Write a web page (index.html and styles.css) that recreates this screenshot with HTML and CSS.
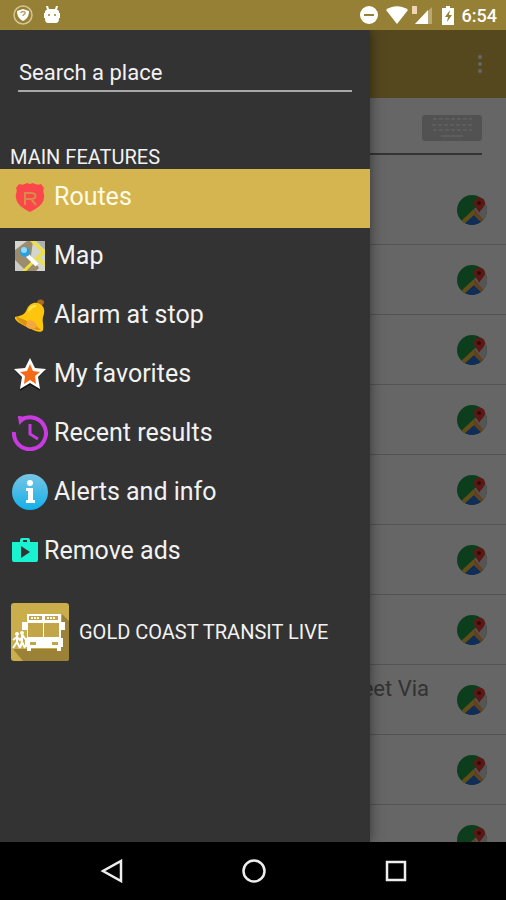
FILE: index.html
```html
<!DOCTYPE html>
<html lang="en">
<head>
    <meta charset="utf-8">
    <meta name="viewport" content="width=device-width, initial-scale=1.0">
    <title>Gold Coast Transit Live</title>
    <link rel="stylesheet" href="styles.css">
</head>
<body>
    <!-- shared icon for the route rows -->
    <svg class="defs" width="0" height="0">
        <symbol id="maps" viewBox="0 0 30 30">
            <clipPath id="disc"><circle cx="15" cy="15" r="15"/></clipPath>
            <g clip-path="url(#disc)">
                <path d="M0 0h30v30H0z" fill="#1e9b4c"/>
                <path d="M17 14L30 4v26z" fill="#d8d4d4"/>
                <path d="M5 30L17 18l12 12z" fill="#2a72dc"/>
                <path d="M2 28L17 14l12 14-2 2-10-10-11 10z" fill="#f4c63d"/>
                <path d="M17 14l12 14-2 2-10-10z" fill="#f0a050"/>
            </g>
            <path d="M22 18c-1-4-5-6-5-10a5 5 0 0 1 11 0c0 4-4 6-6 10z" fill="#e63c32"/>
            <circle cx="22" cy="8" r="2" fill="#7c1d18"/>
        </symbol>
    </svg>

    <header class="status-bar">
        <div class="status-group">
            <svg width="20" height="20" viewBox="0 0 20 20">
                <circle cx="10" cy="10" r="9" fill="none" stroke="#d6c590" stroke-width="1.500"/>
                <path d="M10 4l6 2c0 5-2 8-6 10-4-2-6-5-6-10z" fill="#fff"/>
                <path d="M8 8c0-2 4-2 4 0s-2 1-2 3" fill="none" stroke="#b5a56d" stroke-width="1.500"/>
            </svg>
            <svg width="16" height="18" viewBox="0 0 16 18">
                <path d="M3 4L2 0h2l1 3h6l1-3h2l-1 4c2 0 2 1 2 3h1v5h-1c0 4-1 5-4 5H5c-3 0-4-1-4-5H0V7h1c0-2 0-3 2-3z" fill="#fff"/>
                <circle cx="5" cy="9" r="1" fill="#958036"/>
                <circle cx="11" cy="9" r="1" fill="#958036"/>
            </svg>
        </div>
        <div class="status-group status-right">
            <svg width="18" height="18" viewBox="0 0 18 18">
                <circle cx="9" cy="9" r="9" fill="#fff"/>
                <path d="M4 9h10" stroke="#958036" stroke-width="2"/>
            </svg>
            <svg width="22" height="18" viewBox="0 0 22 18">
                <path d="M0 4c6-5 16-5 22 0L11 18z" fill="#fff"/>
            </svg>
            <svg class="signal" width="20" height="18" viewBox="0 0 20 18">
                <path d="M20 1v17H3z" fill="#b9a873"/>
                <path d="M16 4v14H3z" fill="#fff"/>
                <path d="M0 0h5v8H0z" fill="#eed3b4"/>
            </svg>
            <svg width="12" height="19" viewBox="0 0 12 19">
                <path d="M4 0h4v2h4v17H0V2h4z" fill="#fff"/>
                <path d="M8 4L3 11h3l-1 5 5-7H7z" fill="#958036"/>
            </svg>
            <span class="clock">6:54</span>
        </div>
    </header>

    <main class="screen">
        <div class="page">
            <div class="toolbar">
                <button class="more" aria-label="More options">
                    <svg width="6" height="20" viewBox="0 0 6 20" fill="#fff">
                        <circle cx="3" cy="3" r="2"/><circle cx="3" cy="10" r="2"/><circle cx="3" cy="17" r="2"/>
                    </svg>
                </button>
            </div>
            <div class="filter">
                <input class="filter-input" type="text" aria-label="Filter routes">
                <button class="keyboard" aria-label="Keyboard">
                    <svg width="60" height="26" viewBox="0 0 60 26">
                        <rect width="60" height="26" rx="3" fill="#ccc"/>
                        <path d="M11 4h39M10 10h40M11 15h39" stroke="#e8e8e8" stroke-width="2" stroke-dasharray="4 2"/>
                        <path d="M19 21h22" stroke="#e8e8e8" stroke-width="2"/>
                    </svg>
                </button>
            </div>
            <ul class="routes">
                <li class="route"><svg class="pin"><use href="#maps"/></svg></li>
                <li class="route"><svg class="pin"><use href="#maps"/></svg></li>
                <li class="route"><svg class="pin"><use href="#maps"/></svg></li>
                <li class="route"><svg class="pin"><use href="#maps"/></svg></li>
                <li class="route"><svg class="pin"><use href="#maps"/></svg></li>
                <li class="route"><svg class="pin"><use href="#maps"/></svg></li>
                <li class="route"><svg class="pin"><use href="#maps"/></svg></li>
                <li class="route"><span class="route-name">Street Via</span><svg class="pin"><use href="#maps"/></svg></li>
                <li class="route"><svg class="pin"><use href="#maps"/></svg></li>
                <li class="route"><svg class="pin"><use href="#maps"/></svg></li>
            </ul>
        </div>
        <div class="scrim"></div>

        <nav class="drawer">
            <input class="search" type="text" placeholder="Search a place" aria-label="Search a place">
            <h2 class="section-title">MAIN FEATURES</h2>
            <a class="item selected" href="#">
                <svg width="36" height="36" viewBox="0 0 36 36">
                    <path d="M7 5q3 1 6 0l2-1 3 1 3-1 2 1q3 1 6 0l3 4c-2 3 1 6 0 10-1 7-8 11-14 14C12 30 5 26 4 19c-1-4 2-7 0-10z" fill="#fb474b"/>
                    <path d="M13 26V14h6c6 0 6 6 0 6h-6m6 0l5 6" fill="none" stroke="#d88c48" stroke-width="2"/>
                </svg>
                Routes
            </a>
            <a class="item" href="#">
                <svg width="36" height="36" viewBox="0 0 36 36">
                    <clipPath id="tile"><path d="M3 3h30v30H3z"/></clipPath>
                    <g clip-path="url(#tile)">
                        <path d="M3 3h30v30H3z" fill="#d5d5d0"/>
                        <path d="M3 12L15 3h6l-2 15 8 12-3 3H14L3 22z" fill="#9c8c6d"/>
                        <path d="M14 33L3 23v10z" fill="#c9c9c6"/>
                        <path d="M24 3h9v9z" fill="#aeb0ae"/>
                        <path d="M19 2l15 14M34 12L24 21 11 34M26 20l8 8" fill="none" stroke="#eee139" stroke-width="3"/>
                        <path d="M15 17l10 10" stroke="#fff" stroke-width="4"/>
                        <circle cx="13" cy="14" r="5" fill="#2a9fe0"/>
                        <circle cx="12" cy="12" r="3" fill="#8edbfa"/>
                    </g>
                </svg>
                Map
            </a>
            <a class="item" href="#">
                <svg width="36" height="36" viewBox="0 0 36 36">
                    <path d="M25 6c0-5 8-4 7 0l-3 4z" fill="#a86a20"/>
                    <path d="M3 20c5-1 10-2 12-8 2-5 8-8 13-5 5 3 5 8 3 13-1 5 1 8 0 13-1 3-7 2-14-2C8 27 2 23 3 20z" fill="#fdc60c"/>
                    <path d="M4 20c6 1 19 7 25 13-8 1-24-7-25-13z" fill="#d99410"/>
                    <path d="M15 24c4-2 9 1 10 5-2 4-9 4-11 0z" fill="#f4a640"/>
                    <path d="M17 14c1-3 4-5 7-5" fill="none" stroke="#ffe35c" stroke-width="2"/>
                </svg>
                Alarm at stop
            </a>
            <a class="item" href="#">
                <svg width="36" height="36" viewBox="0 0 36 36">
                    <path d="M18 5l4 10h11l-8 8 3 12-10-6-10 6 3-12-8-8h11z" fill="#171717"/>
                    <path d="M18 2l5 10 11 1-8 8 2 12-10-6-10 6 2-12-8-8 11-1z" fill="#fff"/>
                    <path d="M18 8l3 7 7 1-5 4 1 8-6-4-6 4 1-8-5-4 7-1z" fill="#f46a17"/>
                </svg>
                My favorites
            </a>
            <a class="item" href="#">
                <svg width="36" height="36" viewBox="0 0 36 36" fill="none" stroke="#c93be0">
                    <path d="M2 17A16 16 0 1 0 9 5" stroke-width="4"/>
                    <path d="M18 9v10l8 5" stroke-width="3"/>
                    <path d="M7 2l6 1-5 5z" fill="#c93be0" stroke-width="2"/>
                </svg>
                Recent results
            </a>
            <a class="item" href="#">
                <svg width="36" height="36" viewBox="0 0 36 36">
                    <linearGradient id="blue" x2="0" y2="1">
                        <stop stop-color="#78c5e4"/><stop offset="1" stop-color="#12b0ea"/>
                    </linearGradient>
                    <circle cx="18" cy="18" r="18" fill="url(#blue)"/>
                    <circle cx="18" cy="9" r="3" fill="#fff"/>
                    <path d="M14 14h7v12h2v3h-9v-3h2v-9h-2z" fill="#fff"/>
                </svg>
                Alerts and info
            </a>
            <a class="item" href="#">
                <svg width="26" height="26" viewBox="0 0 26 26">
                    <path d="M8 4V2q0-2 2-2h6q2 0 2 2v2h8v18q0 2-2 2H2q-2 0-2-2V4zm3 0h4V2h-4zM9 8v12l9-6z" fill="#19f3d1" fill-rule="evenodd"/>
                </svg>
                Remove ads
            </a>
            <div class="brand">
                <svg width="58" height="58" viewBox="0 0 58 58">
                    <rect width="58" height="58" rx="3" fill="#cbae4c"/>
                    <path d="M51 11l7 7v38q0 2-2 2H12L2 46h47z" fill="#9c8236"/>
                    <path d="M16 11h34v8h4v8h-4v8h2v9h-2v4h-4v-3H20v3h-4v-4h-2v-9h2v-8h-5v-8h5z" fill="#fff"/>
                    <path d="M18 13h13v4H18zm16 0h13v4H34zM17 20h15v14H17zm16 0h15v14H33z" fill="#c2a548"/>
                    <path d="M19 39h6v3h-6zm22 0h6v3h-6z" fill="#c2a548"/>
                    <path d="M20 15h9M36 15h9" stroke="#fff" stroke-width="2" stroke-dasharray="2 1"/>
                    <circle cx="6" cy="31" r="2" fill="#fff"/>
                    <circle cx="11" cy="30" r="2" fill="#fff"/>
                    <path d="M6 33v6l3 6M6 39l-4 6M11 32v7l3 6M11 39l-2 6M2 37l4-3 3 3 3-4 3 4" fill="none" stroke="#fff" stroke-width="2"/>
                </svg>
                GOLD COAST TRANSIT LIVE
            </div>
        </nav>
    </main>

    <footer class="nav-bar">
        <button class="nav-button" aria-label="Back">
            <svg width="24" height="24" viewBox="0 0 24 24"><path d="M21 2v20L3 12z"/></svg>
        </button>
        <button class="nav-button" aria-label="Home">
            <svg width="24" height="24" viewBox="0 0 24 24"><circle cx="12" cy="12" r="10.500"/></svg>
        </button>
        <button class="nav-button" aria-label="Recent apps">
            <svg width="24" height="24" viewBox="0 0 24 24"><rect x="3" y="3" width="18" height="18"/></svg>
        </button>
    </footer>
</body>
</html>
```
FILE: styles.css
```css
* {
    box-sizing: border-box;
}
body {
    display: flex;
    flex-direction: column;
    height: 100vh;
    margin: 0;
    font-family: Roboto, sans-serif;
    background-color: #000;
    overflow: hidden;
}
svg {
    display: block;
    flex: none;
}
button {
    padding: 0;
    border: 0;
    background: none;
}
.defs {
    position: absolute;
}

/* status bar */
.status-bar {
    display: flex;
    justify-content: space-between;
    align-items: center;
    height: 30px;
    padding: 0 9px 0 13px;
    background-color: #958036;
}
.status-group {
    display: flex;
    align-items: center;
    gap: 11px;
}
.status-right {
    gap: 8px;
}
.signal {
    margin: 0 2px 0 -4px;
}
.clock {
    color: #fff;
    font-size: 18px;
    font-weight: 500;
}

/* page behind the drawer */
.screen {
    position: relative;
    flex: 1;
    min-height: 0;
    overflow: hidden;
}
.page {
    height: 100%;
    overflow: hidden;
    background-color: #fff;
}
.toolbar {
    display: flex;
    justify-content: flex-end;
    align-items: center;
    height: 68px;
    padding-right: 23px;
    background-color: #d4b54f;
}
.filter {
    display: flex;
    align-items: center;
    height: 57px;
    margin: 0 24px 20px;
    padding-top: 4px;
    border-bottom: 2px solid #808080;
}
.filter-input {
    flex: 1;
    border: 0;
    background: none;
}
.routes {
    margin: 0;
    padding: 0;
    list-style: none;
}
.route {
    display: flex;
    justify-content: flex-end;
    align-items: center;
    gap: 28px;
    height: 70px;
    padding: 0 19px;
    border-bottom: 1px solid #d0d0d0;
}
.route-name {
    align-self: flex-start;
    padding-top: 11px;
    color: #808080;
    font-size: 22px;
    line-height: 26px;
}
.pin {
    width: 30px;
    height: 30px;
}
.scrim {
    position: absolute;
    inset: 0;
    background-color: rgba(0, 0, 0, 0.6);
}

/* drawer */
.drawer {
    position: absolute;
    top: 0;
    bottom: 0;
    left: 0;
    width: calc(100% - 136px);
    background-color: #333;
    box-shadow: 0 0 12px rgba(0, 0, 0, 0.5);
    color: #f2f2f2;
}
.search {
    display: block;
    width: calc(100% - 36px);
    height: 38px;
    margin: 24px 18px 54px;
    padding: 0 1px;
    border: 0;
    border-bottom: 2px solid #a8a8a8;
    background: none;
    color: #f2f2f2;
    font-family: inherit;
    font-size: 22px;
}
.search::placeholder {
    color: #f2f2f2;
}
.section-title {
    margin: 0;
    padding-left: 10px;
    font-size: 20px;
    font-weight: 400;
    line-height: 23px;
}
.item {
    display: flex;
    align-items: center;
    gap: 6px;
    height: 59px;
    padding: 0 12px 4px;
    color: #f2f2f2;
    font-size: 25px;
    text-decoration: none;
}
.selected {
    background-color: #d4b54f;
    color: #fffbe6;
}
.brand {
    display: flex;
    align-items: center;
    gap: 10px;
    padding: 21px 11px;
    font-size: 20px;
}

/* system navigation */
.nav-bar {
    display: flex;
    justify-content: center;
    align-items: center;
    gap: 118px;
    height: 58px;
    padding-left: 2px;
    background-color: #000;
}
.nav-button svg {
    fill: none;
    stroke: #eee;
    stroke-width: 2.5;
}
```
